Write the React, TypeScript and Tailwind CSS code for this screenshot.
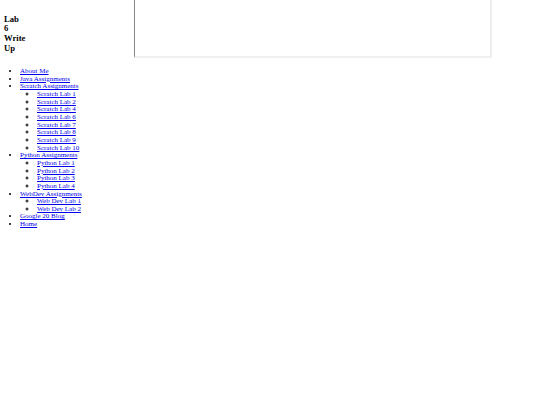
import React from "react";

const A = ({ children }: { children: React.ReactNode }) => (
  <a href="#" className="text-[#0000ee] underline">
    {children}
  </a>
);

export default function App() {
  const scratch = ["Scratch Lab 1", "Scratch Lab 2", "Scratch Lab 4", "Scratch Lab 6", "Scratch Lab 7", "Scratch Lab 8", "Scratch Lab 9", "Scratch Lab 10"];
  const python = ["Python Lab 1", "Python Lab 2", "Python Lab 3", "Python Lab 4"];
  const web = ["Web Dev Lab 1", "Web Dev Lab 2"];
  return (
    <div className="bg-white text-black px-[4px] min-h-[405px]" style={{ fontFamily: '"Liberation Serif", "Times New Roman", serif' }}>
      <div className="flex items-stretch">
        <div className="w-[130px] flex items-center pt-[10px]">
          <h3 className="font-bold text-[8.6px] leading-[9.7px] w-[20px]">Lab 6 Write Up</h3>
        </div>
        <div className="w-[358px] h-[58px] border-l border-l-[#8a8a8a] border-r-2 border-r-[#ededed] border-b-2 border-b-[#f0f0f0]"></div>
      </div>
      <ul className="list-disc pl-[16px] mt-[10px] text-[7px] leading-[7.65px]">
        <li><A>About Me</A></li>
        <li><A>Java Assignments</A></li>
        <li>
          <A>Scratch Assignments</A>
          <ul className="[list-style-type:circle] pl-[17px]">
            {scratch.map((s) => (
              <li key={s}><A>{s}</A></li>
            ))}
          </ul>
        </li>
        <li>
          <A>Python Assignments</A>
          <ul className="[list-style-type:circle] pl-[17px]">
            {python.map((s) => (
              <li key={s}><A>{s}</A></li>
            ))}
          </ul>
        </li>
        <li>
          <A>WebDev Assignments</A>
          <ul className="[list-style-type:circle] pl-[17px]">
            {web.map((s) => (
              <li key={s}><A>{s}</A></li>
            ))}
          </ul>
        </li>
        <li><A>Google 20 Blog</A></li>
        <li><A>Home</A></li>
      </ul>
    </div>
  );
}
